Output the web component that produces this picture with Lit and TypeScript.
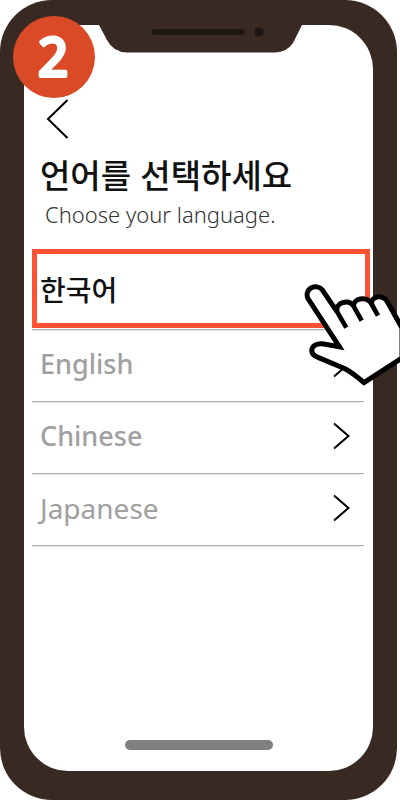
import { LitElement, html, css, svg } from "lit";
import { customElement, property, state } from "lit/decorators.js";
import { classMap } from "lit/directives/class-map.js";

interface Language {
  code: string;
  label: string;
  tone: string;
}

const LANGUAGES: Language[] = [
  { code: "ko", label: "한국어", tone: "native" },
  { code: "en", label: "English", tone: "medium" },
  { code: "zh", label: "Chinese", tone: "medium" },
  { code: "ja", label: "Japanese", tone: "regular" },
];

@customElement("language-list")
export class LanguageList extends LitElement {
  @property({ attribute: false }) items: Language[] = [];
  @state() private selected = "ko";

  static styles = css`
    :host {
      display: block;
    }
    .list {
      list-style: none;
      margin: 0;
      padding: 0;
    }
    .item {
      position: relative;
      border-bottom: 1px solid #b0b0b0;
      box-shadow: 0 1px 0 #ececec;
    }
    .row {
      display: flex;
      align-items: center;
      justify-content: space-between;
      width: 100%;
      height: 71px;
      padding: 0 14px 4px 8px;
      border: 0;
      background: none;
      font: 400 28px/40px "Noto Sans", "Noto Sans CJK KR", sans-serif;
      color: #a0a0a0;
      text-align: left;
      cursor: pointer;
    }
    .native {
      height: 80px;
      padding-bottom: 0;
      font: 500 28px/40px "Noto Sans CJK KR", sans-serif;
      color: #111;
    }
    .medium {
      font-size: 27px;
      font-weight: 500;
    }
    .chevron {
      width: 18px;
      height: 28px;
      fill: none;
      stroke: #000;
      stroke-width: 2;
    }
    .highlight {
      position: absolute;
      inset: 0 -6px 1px 0;
      border: 5px solid #ff5232;
      pointer-events: none;
    }
  `;

  render() {
    return html`
      <ul class="list">
        ${this.items.map((item) => {
          const active = this.selected === item.code;
          return html`
            <li class="item">
              <button
                class=${classMap({ row: true, [item.tone]: true })}
                aria-pressed=${active}
                @click=${() => (this.selected = item.code)}
              >
                <span>${item.label}</span>
                ${active
                  ? null
                  : html`<svg class="chevron" viewBox="0 0 18 28" aria-hidden="true">
                      <path d="M2 1.5 16.5 14 2 26.5" />
                    </svg>`}
              </button>
              ${active ? html`<span class="highlight"></span>` : null}
            </li>
          `;
        })}
      </ul>
    `;
  }
}

const pointingHand = svg`
  <path d="M148 320 54 176C49 165 51 152 61 145C74 136 90 140 98 151L141 215C139 202 146 191 158 188C171 184 184 187 191 199C190 188 198 179 210 177C224 174 237 178 245 191C244 181 251 173 262 171C275 169 286 175 292 185L336 264V354L222 428C203 411 184 396 165 386L86 353C69 347 63 339 66 326C70 315 80 310 97 311Z"
    fill="#fff" stroke="#000" stroke-width="15" stroke-linejoin="miter" />
  <path d="M141 215 169 263M191 199 215 242M243 189 264 227"
    fill="none" stroke="#000" stroke-width="14" />
`;

@customElement("app-root")
export class AppRoot extends LitElement {
  static styles = css`
    :host {
      display: block;
      background: #fff;
    }
    .page {
      position: relative;
      box-sizing: border-box;
      min-height: 100vh;
      display: flex;
      padding-right: 3px;
      overflow: hidden;
    }
    .phone {
      box-sizing: border-box;
      flex: 1;
      display: flex;
      padding: 25px 24px 29px;
      border-radius: 52px;
      background: #382a22;
    }
    .screen {
      flex: 1;
      display: flex;
      flex-direction: column;
      border-radius: 44px;
      background: #fff;
    }
    .notch {
      display: block;
      width: 206px;
      height: 28px;
      margin: 0 auto;
    }
    .header {
      padding: 44px 16px 0;
    }
    .back {
      display: block;
      padding: 0;
      margin-left: 6px;
      border: 0;
      background: none;
      cursor: pointer;
    }
    .back-icon {
      display: block;
      width: 24px;
      height: 44px;
      fill: none;
      stroke: #000;
      stroke-width: 2;
    }
    .title {
      margin: 11px 0 0;
      font: 500 33px/44px "Noto Sans CJK KR", sans-serif;
      color: #111;
      white-space: nowrap;
    }
    .subtitle {
      margin: 4px 0 0 5px;
      font: 300 22px/28px "Noto Sans", sans-serif;
      color: #333;
      white-space: nowrap;
    }
    .languages {
      margin: 21px 9px 0 8px;
    }
    .home {
      width: 148px;
      height: 10px;
      margin: auto auto 21px;
      border-radius: 5px;
      background: #808080;
    }
    .step {
      position: absolute;
      top: 16px;
      left: 13px;
      width: 82px;
      height: 82px;
    }
    .step-number {
      font: 400 52px "Noto Sans", sans-serif;
      fill: #fff;
      stroke: #fff;
      stroke-width: 4;
      stroke-linejoin: round;
      text-anchor: middle;
    }
    .hand {
      position: absolute;
      top: 280px;
      right: 0;
      width: 100px;
      height: 110px;
      pointer-events: none;
    }
  `;

  render() {
    return html`
      <div class="page">
        <div class="phone">
          <main class="screen">
            <svg class="notch" viewBox="0 0 206 28" aria-hidden="true">
              <path d="M3 0H206L197 18Q191 27 179 27.500H31Q17 27 11 15Z" fill="#382a22" />
              <rect x="56" y="4" width="93" height="6" rx="3" fill="#1e1713" />
              <circle cx="163" cy="7" r="4.500" fill="#1e1713" />
            </svg>
            <header class="header">
              <button class="back" aria-label="Back">
                <svg class="back-icon" viewBox="0 0 24 44" aria-hidden="true">
                  <path d="M21.500 3 2 22 21.500 41" />
                </svg>
              </button>
              <h1 class="title" lang="ko">언어를 선택하세요</h1>
              <p class="subtitle">Choose your language.</p>
            </header>
            <language-list class="languages" .items=${LANGUAGES}></language-list>
            <div class="home"></div>
          </main>
        </div>
        <svg class="step" viewBox="0 0 82 82">
          <circle cx="41" cy="41" r="41" fill="#da4a27" />
          <text class="step-number" x="40" y="60">2</text>
        </svg>
        <svg class="hand" viewBox="30 120 300 330" aria-hidden="true">${pointingHand}</svg>
      </div>
    `;
  }
}
